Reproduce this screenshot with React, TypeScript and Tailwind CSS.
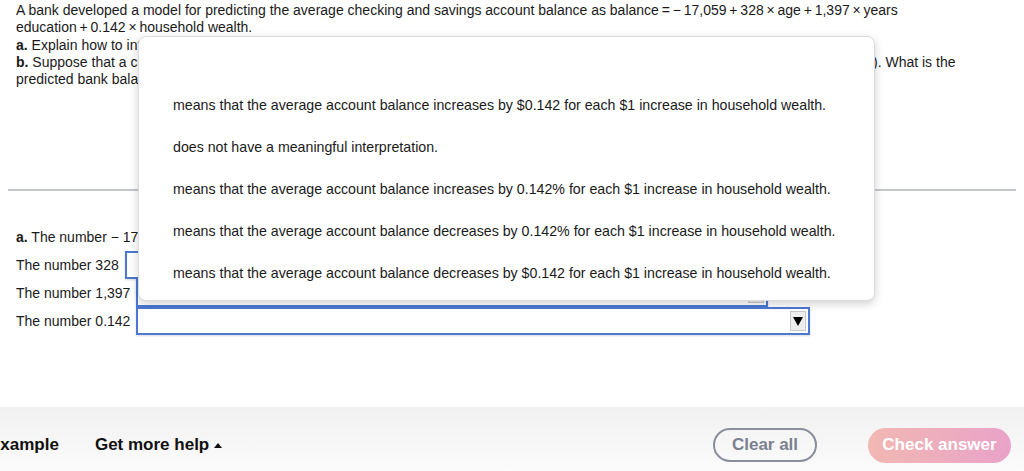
import React from "react";

const options = [
  "",
  "means that the average account balance increases by $0.142 for each $1 increase in household wealth.",
  "does not have a meaningful interpretation.",
  "means that the average account balance increases by 0.142% for each $1 increase in household wealth.",
  "means that the average account balance decreases by 0.142% for each $1 increase in household wealth.",
  "means that the average account balance decreases by $0.142 for each $1 increase in household wealth.",
];

function SelectBox({ width }: { width: string }) {
  return (
    <div
      className={`${width} h-[28px] border-2 border-[#4a78d4] bg-white flex items-center justify-end pr-[2px] shadow-[0_1px_2px_rgba(0,0,0,0.15)]`}
    >
      <div className="w-[16px] h-[20px] bg-[#eeeeee] border border-[#c8c8c8] flex items-center justify-center">
        <svg width="10" height="9" viewBox="0 0 10 9">
          <path d="M0 0 L10 0 L5 9 Z" fill="#000" />
        </svg>
      </div>
    </div>
  );
}

export default function App() {
  return (
    <div className="relative w-[1024px] h-[471px] overflow-hidden bg-white text-[14px] text-[#1a1a1a] font-['Liberation_Sans',Arial,sans-serif] flex flex-col">
      <div className="px-4 pt-[2px] leading-[17.3px] whitespace-nowrap">
        <div>
          A bank developed a model for predicting the average checking and savings account balance as balance{"\u2009"}={"\u2009"}−{"\u2009"}17,059{"\u2009"}+{"\u2009"}328{"\u2009"}×{"\u2009"}age{"\u2009"}+{"\u2009"}1,397{"\u2009"}×{"\u2009"}years
        </div>
        <div>education{"\u2009"}+{"\u2009"}0.142{"\u2009"}×{"\u2009"}household wealth.</div>
        <div>
          <b>a.</b> Explain how to interpret each coefficient in the model.
        </div>
        <div>
          <span className="inline-block w-[857px] overflow-hidden align-bottom">
            <b>b.</b> Suppose that a customer is 32 years old, has 16 years of education, and has household wealth of $150,000 (in dollars
          </span>
          ). What is the
        </div>
        <div>predicted bank balance?</div>
      </div>

      <div className="mt-[101px] mx-2 h-[2px] bg-[#c3c6ce]" />

      <div className="mt-[32px] px-4 flex flex-col">
        <div className="h-[28px] flex items-center gap-[6px]">
          <span>
            <b>a.</b> The number − 17,059
          </span>
          <SelectBox width="w-[500px]" />
        </div>
        <div className="h-[28px] flex items-center gap-[6px]">
          <span>The number 328</span>
          <SelectBox width="w-[640px]" />
        </div>
        <div className="h-[28px] flex items-center gap-[6px]">
          <span>The number 1,397</span>
          <SelectBox width="w-[632px]" />
        </div>
        <div className="h-[28px] flex items-center gap-[6px]">
          <span>The number 0.142</span>
          <SelectBox width="w-[674px]" />
        </div>
      </div>

      <div className="mt-auto h-[64px] pt-[12px] bg-gradient-to-b from-[#f1f1f1] to-[#fbfbfb] flex items-center text-[17px] font-bold">
        <span className="-ml-[11px] text-[#111]">Example</span>
        <span className="ml-[36px] text-[#111] flex items-center gap-[5px]">
          Get more help
          <svg width="8" height="5" viewBox="0 0 8 5">
            <path d="M0 5 L4 0 L8 5 Z" fill="#111" />
          </svg>
        </span>
        <button className="ml-auto w-[104px] h-[34px] rounded-full border-2 border-[#8a8e9c] text-[#7c8090]">
          Clear all
        </button>
        <button className="ml-[51px] mr-[13px] w-[143px] h-[35px] rounded-full bg-gradient-to-r from-[#f2b8b2] to-[#e9a2c8] text-white">
          Check answer
        </button>
      </div>

      <div className="absolute left-[138px] top-[36px] w-[737px] h-[265px] bg-white border border-[#dcdcdc] rounded-[8px] shadow-[0_3px_10px_rgba(0,0,0,0.18)] pt-[6px] text-[14.2px]">
        {options.map((o, i) => (
          <div key={i} className="h-[42px] flex items-center pl-[34px]">
            {o}
          </div>
        ))}
      </div>
    </div>
  );
}
